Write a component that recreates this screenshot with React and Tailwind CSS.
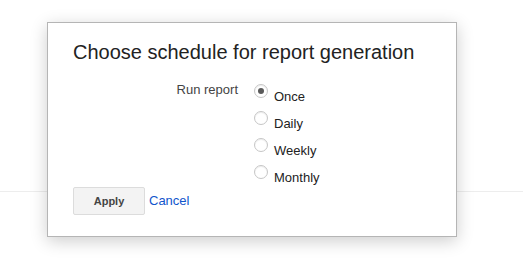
const options = ['Once', 'Daily', 'Weekly', 'Monthly']

function Radio({ checked }) {
  return (
    <span className="flex h-[14px] w-[14px] shrink-0 items-center justify-center rounded-full border border-[#c6c6c6] bg-white shadow-[inset_0_1px_1px_rgba(0,0,0,0.08)]">
      {checked && <span className="h-[6px] w-[6px] rounded-full bg-[#5a5a5a]" />}
    </span>
  )
}

export default function App() {
  return (
    <div className="relative h-[269px] w-[523px] overflow-hidden bg-white font-['Liberation_Sans',Arial,sans-serif]">
      {/* page behind the dialog */}
      <div className="mt-[191px] h-px w-full bg-[#ededed]" />

      {/* dialog */}
      <div className="absolute left-[47px] top-[22px] h-[215px] w-[410px] border border-[#b5b5b5] bg-white pl-[25px] pt-[17px] shadow-[0_4px_16px_rgba(0,0,0,0.2)]">
        <h2 className="text-[20px] leading-[24px] text-[#222]">Choose schedule for report generation</h2>

        <div className="mt-[20px] flex">
          <div className="w-[181px] pr-[16px] text-right text-[13px] leading-[15px] text-[#444] -mt-[2px]">Run report</div>
          <div className="flex flex-col">
            {options.map((o, i) => (
              <div key={o} className="flex h-[27px] items-start gap-[6px]">
                <Radio checked={i === 0} />
                <span className="mt-[5px] text-[13px] leading-[15px] text-[#222]">{o}</span>
              </div>
            ))}
          </div>
        </div>

        <div className="mt-[-5px] flex items-center gap-[4px]">
          <button className="h-[28px] w-[72px] rounded-[2px] border border-[#dcdcdc] bg-[#f3f3f3] text-[11px] font-bold text-[#444]">
            Apply
          </button>
          <a className="text-[13px] text-[#1155cc]">Cancel</a>
        </div>
      </div>
    </div>
  )
}
